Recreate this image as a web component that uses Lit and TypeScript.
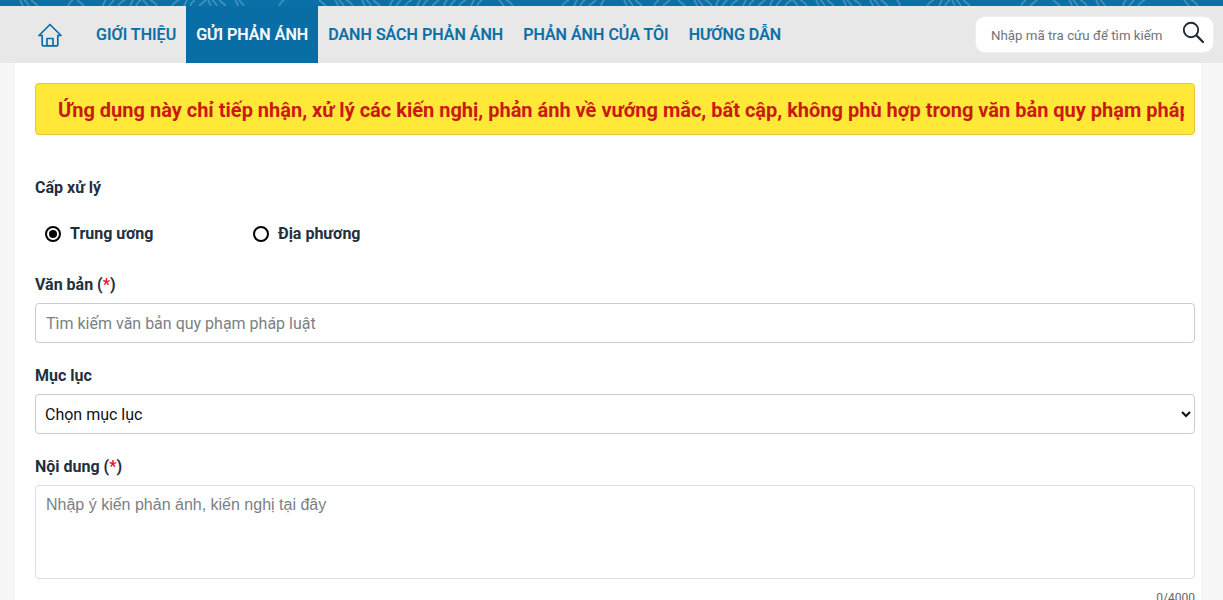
import { LitElement, html, css } from "lit";
import { customElement } from "lit/decorators.js";

// Ornamental pattern of the top band: [start, end] x-ranges holding light strokes.
const PATTERN_RANGES: [number, number][] = [
  [23, 41], [68, 74], [84, 98], [103, 146], [148, 168], [172, 207], [211, 254], [279, 287],
  [326, 390], [390, 488], [504, 520], [562, 609], [627, 646], [654, 670], [685, 716], [716, 798],
  [798, 904], [927, 951], [955, 982], [1021, 1044], [1060, 1115], [1123, 1150], [1189, 1209],
];

function patternPath(): string {
  let d = "";
  PATTERN_RANGES.forEach(([a, b], i) => {
    const dir = i % 2 ? 1 : -1;
    for (let x = a, n = i; x < b - 2; x += 6 + (n % 3) * 3, n++) {
      const lean = dir * (3 + (n % 3) * 2);
      d += `M${x} 6Q${x + lean * 0.3} ${n % 2 ? 2 : 4} ${x + lean} 0`;
    }
  });
  return d;
}

@customElement("app-root")
export class AppRoot extends LitElement {
  static styles = css`
    :host { display: block; height: 600px; overflow: hidden; background: #f7f7f7; font-family: Roboto, "Noto Sans", sans-serif; color: #212f3f; }
    * { box-sizing: border-box; }
    .band { display: block; width: 100%; height: 6px; background: #0a70a8; }
    .nav { height: 57px; background: #e8e8e8; display: flex; align-items: stretch; padding-left: 38px; }
    .home { display: flex; align-items: center; width: 48px; }
    .item { display: flex; align-items: center; padding: 0 10px; font-size: 16px; font-weight: 500; letter-spacing: 0.03px; color: #0a6ea6; white-space: nowrap; -webkit-text-stroke: 0.2px currentColor; }
    .item.active { background: #0a6ea6; color: #fff; }
    .search { margin-left: auto; margin-right: 9px; margin-top: 10px; width: 239px; height: 37px; background: #fff; border-radius: 10px; display: flex; align-items: center; justify-content: space-between; padding: 0 9px 0 15px; border: 1px solid #eeeeee; }
    .search span { font-size: 13.3px; color: #6f7479; white-space: nowrap; padding-top: 2px; }
    .search svg { margin-top: -5px; }
    .card { margin: 0 22px 0 15px; background: #fff; height: 537px; padding: 20px 6px 0 20px; box-shadow: 0 0 6px rgba(0,0,0,.03); }
    .notice { height: 52px; background: #ffe838; border: 1px solid #e6c63c; border-radius: 4px; padding: 0 10px 0 22px; display: flex; align-items: center; overflow: hidden; }
    .notice span { font-size: 20px; font-weight: 700; color: #c91a12; white-space: nowrap; overflow: hidden; display: block; width: 100%; line-height: 50px; padding-top: 1px; }
    label, .label { display: block; font-size: 16px; font-weight: 700; line-height: 20px; color: #212f3f; }
    .label.first { margin-top: 43px; }
    .star { color: #e8112d; }
    .radios { display: flex; margin-top: 26px; height: 20px; }
    .radio { display: flex; align-items: center; gap: 9px; padding-left: 10px; font-size: 16px; font-weight: 700; line-height: 20px; }
    .radio:first-child { width: 208px; }
    .dot { width: 16px; height: 16px; border-radius: 50%; border: 2px solid #000; background: #fff; display: flex; align-items: center; justify-content: center; }
    .dot.on::after { content: ""; width: 8px; height: 8px; border-radius: 50%; background: #000; }
    .mt1 { margin-top: 31px; }
    .mt2 { margin-top: 23px; }
    .control { display: block; width: 100%; margin-top: 8px; border: 1px solid #c9cccf; border-radius: 4px; background: #fff; font-family: Roboto, sans-serif; font-size: 16px; outline: none; }
    .control::placeholder { color: #7a7f85; opacity: 1; }
    input.control { height: 40px; padding: 0 10px; }
    select.control { height: 40px; padding: 0 5px; color: #111; }
    textarea.control { height: 94px; padding: 10px 10px; resize: none; border-color: #dcdcdc; font-family: "Liberation Sans", Arial, sans-serif; }
    .count { text-align: right; font-size: 12px; line-height: 14px; margin-top: 12px; color: #666; }
  `;

  render() {
    return html`
      <svg class="band" viewBox="0 0 1223 6" preserveAspectRatio="none" fill="none" stroke="#4290bb" stroke-width="1.8">
        <path d=${patternPath()}></path>
      </svg>
      <nav class="nav">
        <div class="home">
          <svg width="24" height="24" viewBox="0 0 24 24" fill="none" stroke="#0a6ea6" stroke-width="1.7" stroke-linejoin="round" stroke-linecap="round">
            <path d="M1 12.5 12 1.5l11 11h-3.2M1 12.5h3.2"/>
            <path d="M4.2 12.5v9.3q0 1 1 1h13.6q1 0 1-1v-9.3"/>
            <path d="M9 22.5v-7h6v7"/>
          </svg>
        </div>
        <a class="item">GIỚI THIỆU</a>
        <a class="item active">GỬI PHẢN ÁNH</a>
        <a class="item">DANH SÁCH PHẢN ÁNH</a>
        <a class="item">PHẢN ÁNH CỦA TÔI</a>
        <a class="item">HƯỚNG DẪN</a>
        <div class="search">
          <span>Nhập mã tra cứu để tìm kiếm</span>
          <svg width="22" height="22" viewBox="0 0 22 22" fill="none" stroke="#1d2b3a" stroke-linecap="round">
            <circle cx="9" cy="9" r="7.2" stroke-width="1.9"/>
            <path d="M14.4 14.4 21 21" stroke-width="2.2"/>
          </svg>
        </div>
      </nav>
      <main class="card">
        <div class="notice"><span>Ứng dụng này chỉ tiếp nhận, xử lý các kiến nghị, phản ánh về vướng mắc, bất cập, không phù hợp trong văn bản quy phạm pháp luật</span></div>
        <div class="label first">Cấp xử lý</div>
        <div class="radios">
          <div class="radio"><i class="dot on"></i>Trung ương</div>
          <div class="radio"><i class="dot"></i>Địa phương</div>
        </div>
        <label class="mt1">Văn bản (<span class="star">*</span>)</label>
        <input class="control" placeholder="Tìm kiếm văn bản quy phạm pháp luật" />
        <label class="mt2">Mục lục</label>
        <select class="control"><option>Chọn mục lục</option></select>
        <label class="mt2">Nội dung (<span class="star">*</span>)</label>
        <textarea class="control" placeholder="Nhập ý kiến phản ánh, kiến nghị tại đây"></textarea>
        <div class="count">0/4000</div>
      </main>
    `;
  }
}
